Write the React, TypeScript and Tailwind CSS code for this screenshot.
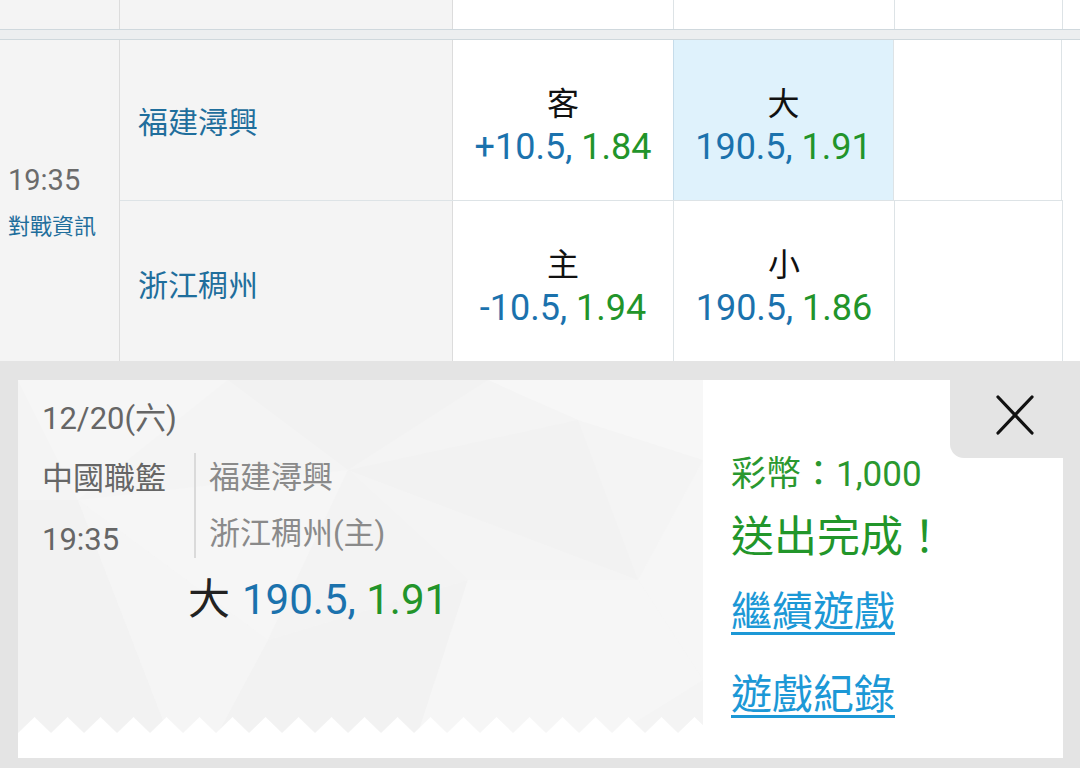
import React from 'react';

const teeth = Array.from({ length: 22 }, (_, i) => i * 33);

const Odds = ({ label, line, price, active }: { label: string; line: string; price: string; active?: boolean }) => (
  <div
    className={`w-[221px] shrink-0 border-r border-[#dde3e6] flex flex-col items-center justify-center pt-[14px] ${
      active ? 'bg-[#dff2fc] border-l border-l-[#c6dcea] -ml-px' : 'bg-white'
    }`}
  >
    <div className="text-[32px] leading-[40px] text-[#111]">{label}</div>
    <div className="text-[36px] leading-[46px] whitespace-nowrap">
      <span className="text-[#1b72ad]">{line}, </span>
      <span className="text-[#22942a]">{price}</span>
    </div>
  </div>
);

const Facets = () => (
  <svg className="absolute inset-0 w-full h-full" viewBox="0 0 685 353" preserveAspectRatio="none">
    <rect width="685" height="353" fill="#f4f4f4" />
    <polygon points="0,0 210,0 60,120" fill="#f6f6f6" />
    <polygon points="210,0 470,0 330,90" fill="#f2f2f2" />
    <polygon points="470,0 685,0 685,80 560,40" fill="#f7f7f7" />
    <polygon points="0,120 60,120 150,353 0,353" fill="#f2f2f2" />
    <polygon points="60,120 330,90 250,260" fill="#f6f6f6" />
    <polygon points="330,90 560,40 620,200" fill="#f2f2f2" />
    <polygon points="620,200 685,80 685,300" fill="#f6f6f6" />
    <polygon points="250,260 450,200 400,353 200,353" fill="#f2f2f2" />
    <polygon points="450,200 620,200 685,300 600,353 400,353" fill="#f6f6f6" />
    <polygon points="150,353 60,120 250,260 200,353" fill="#f5f5f5" />
    <polygon points="330,90 450,200 250,260" fill="#f3f3f3" />
    <g fill="#ffffff">
      {teeth.map((x) => (
        <polygon key={x} points={`${x},353 ${x + 16.5},337 ${x + 33},353`} />
      ))}
    </g>
  </svg>
);

export default function App() {
  return (
    <div className="w-[1080px] h-[768px] overflow-hidden bg-[#e4e4e4] font-[Roboto,'Noto_Sans_CJK_TC',sans-serif]">
      <div className="bg-white">
        {/* previous row tail */}
        <div className="flex h-[30px] border-b border-[#cfd8dd]">
          <div className="w-[120px] shrink-0 bg-[#f4f4f4] border-r border-[#dcdcdc]" />
          <div className="w-[333px] shrink-0 bg-[#f4f4f4] border-r border-[#dcdcdc]" />
          <div className="w-[221px] shrink-0 border-r border-[#dde3e6]" />
          <div className="w-[221px] shrink-0 border-r border-[#dde3e6]" />
          <div className="w-[168px] shrink-0 border-r border-[#dde3e6]" />
        </div>
        <div className="h-[10px] bg-[#eceef0] border-b border-[#cfd8dd]" />

        {/* match */}
        <div className="flex h-[321px]">
          <div className="w-[120px] shrink-0 bg-[#f4f4f4] border-r border-[#dcdcdc] flex flex-col justify-center pl-[8px] pt-[4px]">
            <div className="text-[29px] leading-[34px] text-[#6b6b6b]">19:35</div>
            <div className="mt-[15px] text-[22px] leading-[30px] text-[#1f6e9c]">對戰資訊</div>
          </div>
          <div className="flex flex-col">
            <div className="flex h-[161px] border-b border-[#dde3e6]">
              <div className="w-[333px] shrink-0 bg-[#f4f4f4] border-r border-[#dcdcdc] flex items-center pl-[18px] pt-[4px] text-[30px] text-[#1f6e9c]">
                福建潯興
              </div>
              <Odds label="客" line="+10.5" price="1.84" />
              <Odds label="大" line="190.5" price="1.91" active />
              <div className="w-[168px] shrink-0 border-r border-[#dde3e6]" />
            </div>
            <div className="flex h-[160px]">
              <div className="w-[333px] shrink-0 bg-[#f4f4f4] border-r border-[#dcdcdc] flex items-center pl-[18px] pt-[8px] text-[30px] text-[#1f6e9c]">
                浙江稠州
              </div>
              <Odds label="主" line="-10.5" price="1.94" />
              <Odds label="小" line="190.5" price="1.86" />
              <div className="w-[168px] shrink-0 border-r border-[#dde3e6]" />
            </div>
          </div>
        </div>
      </div>

      {/* bet result popup */}
      <div className="pt-[19px] pl-[18px]">
        <div className="relative flex w-[1045px] h-[378px] bg-white">
          <div className="relative w-[685px] h-[353px] shrink-0">
            <Facets />
            <div className="relative pl-[24px] pt-[21px] text-[31px] text-[#666]">
              <div className="leading-[36px]">12/20(六)</div>
              <div className="flex mt-[16px]">
                <div className="w-[152px] shrink-0 pt-[8px]">
                  <div className="leading-[36px]">中國職籃</div>
                  <div className="leading-[36px] mt-[25px]">19:35</div>
                </div>
                <div className="border-l-2 border-[#dadada] pl-[13px] pt-[7px] h-[105px] text-[#8a8a8a]">
                  <div className="leading-[36px]">福建潯興</div>
                  <div className="leading-[36px] mt-[20px]">浙江稠州(主)</div>
                </div>
              </div>
              <div className="mt-[17px] pl-[146px] text-[42px] leading-[50px] whitespace-nowrap">
                <span className="text-[#222]">大</span>
                <span className="text-[#1b72ad] ml-[12px]">190.5, </span>
                <span className="text-[#22942a]">1.91</span>
              </div>
            </div>
          </div>

          <div className="flex-1 pl-[28px] pt-[75px]">
            <div className="text-[35px] leading-[40px] text-[#2a982f]">彩幣：1,000</div>
            <div className="mt-[16px] text-[43px] leading-[52px] text-[#22962a]">送出完成！</div>
            <div className="mt-[24px] text-[41px] leading-[50px] text-[#1c98d6] underline decoration-[3px] underline-offset-[6px]">
              繼續遊戲
            </div>
            <div className="mt-[33px] text-[41px] leading-[50px] text-[#1c98d6] underline decoration-[3px] underline-offset-[6px]">
              遊戲紀錄
            </div>
          </div>

          <button className="absolute top-0 right-0 w-[113px] h-[78px] bg-[#e4e4e4] rounded-bl-[14px] flex items-center justify-center pl-[16px] pb-[8px]">
            <svg width="38" height="40" viewBox="0 0 38 40" fill="none" stroke="#111" strokeWidth="3.2" strokeLinecap="round">
              <line x1="2" y1="2" x2="36" y2="38" />
              <line x1="36" y1="2" x2="2" y2="38" />
            </svg>
          </button>
        </div>
      </div>
    </div>
  );
}
